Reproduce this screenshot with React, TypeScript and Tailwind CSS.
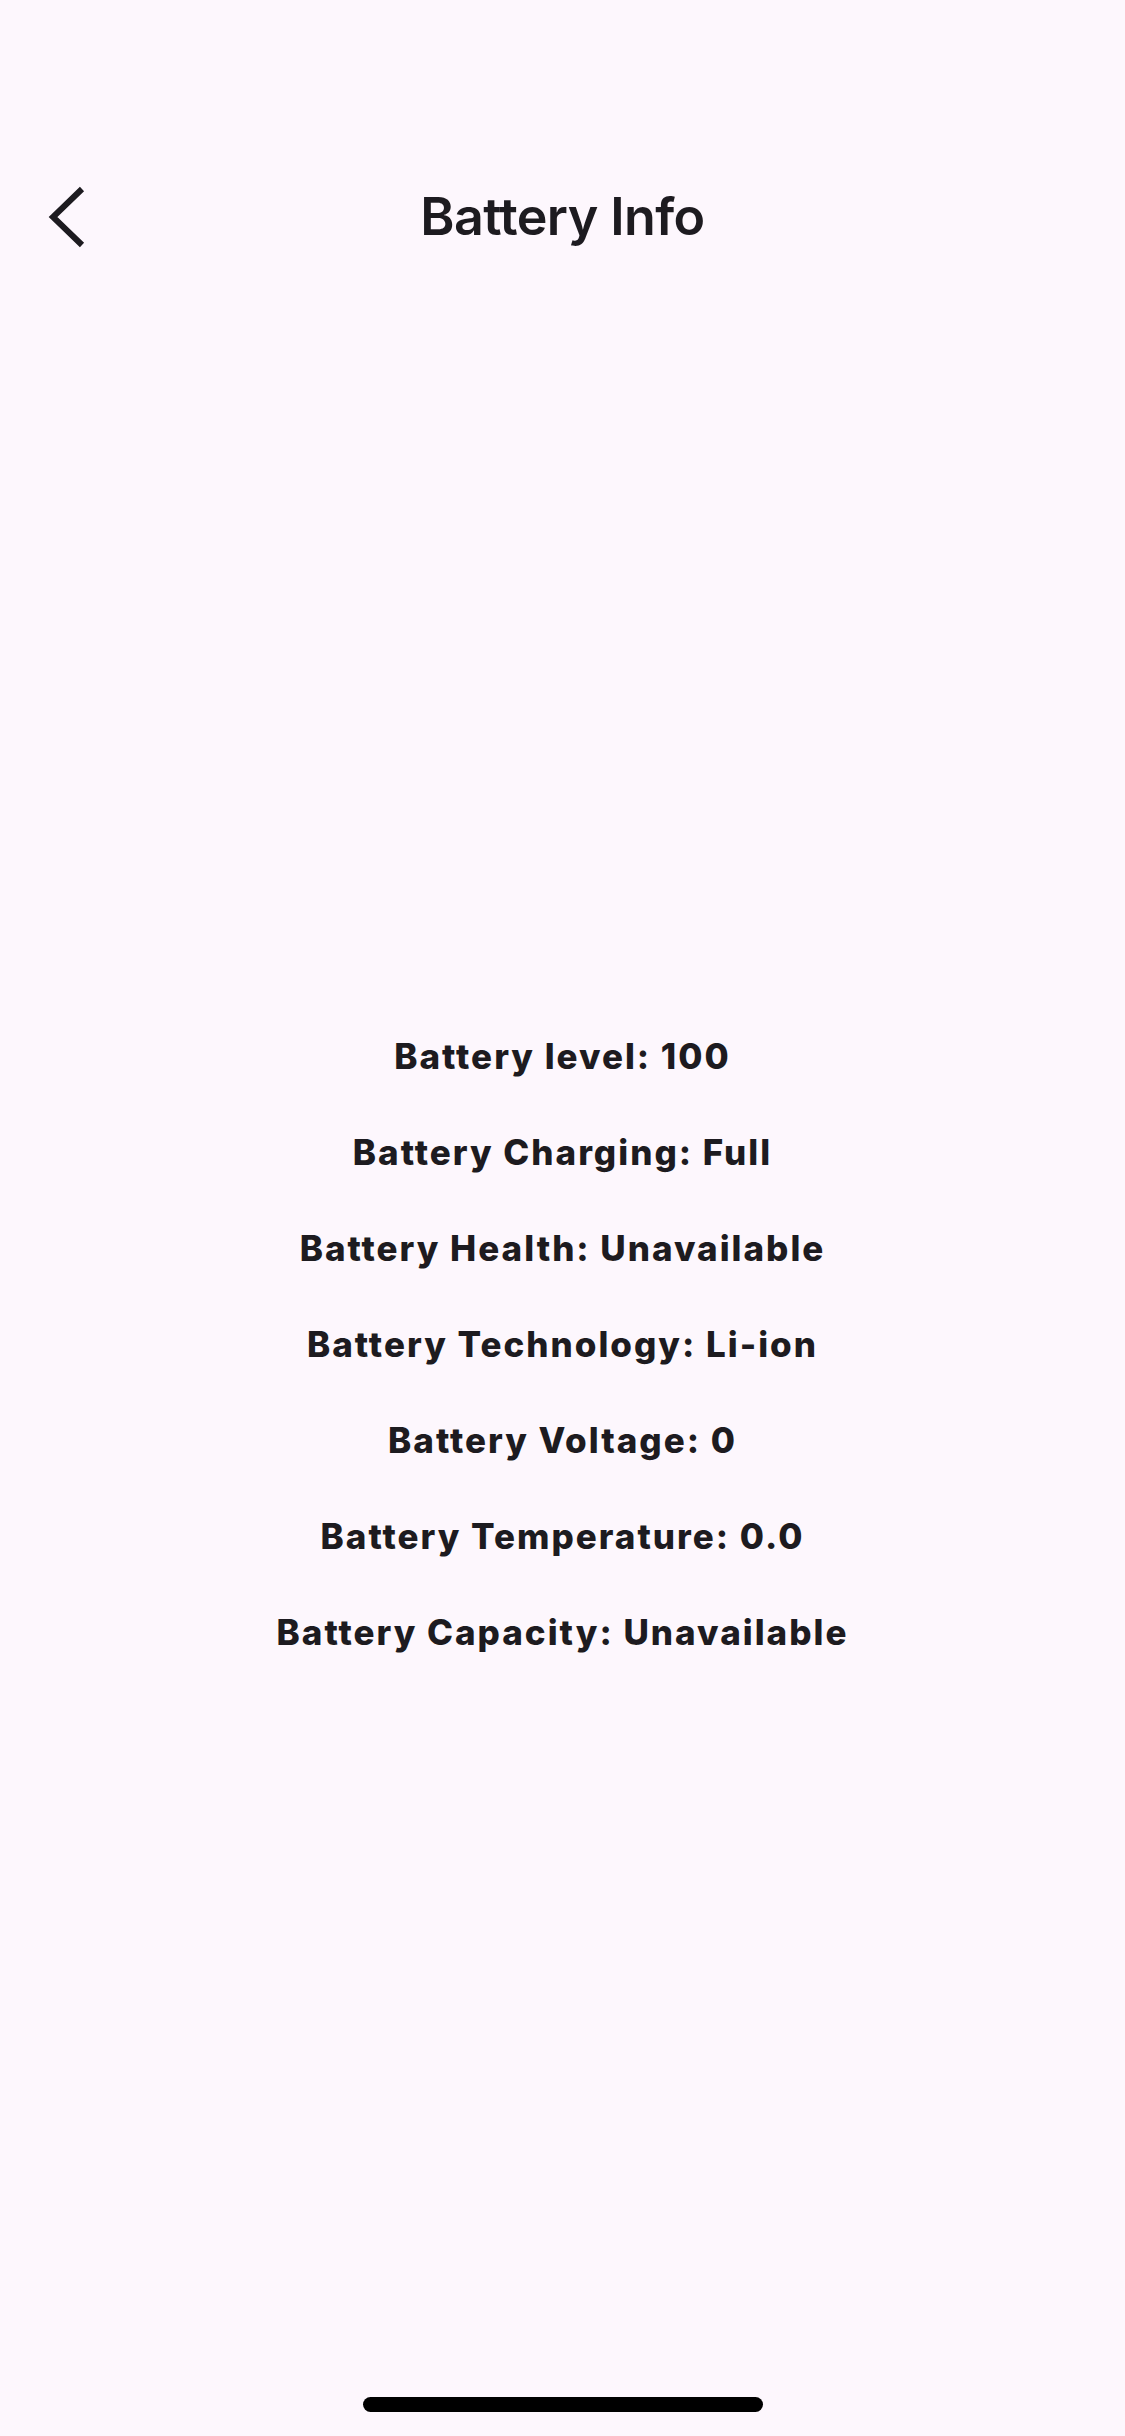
const rows = [
  "Battery level: 100",
  "Battery Charging: Full",
  "Battery Health: Unavailable",
  "Battery Technology: Li-ion",
  "Battery Voltage: 0",
  "Battery Temperature: 0.0",
  "Battery Capacity: Unavailable",
];

function BackIcon() {
  return (
    <svg width="40" height="64" viewBox="0 0 40 64" fill="none">
      <polyline
        points="35,4 6,32 35,60"
        stroke="#1d1b20"
        strokeWidth="6"
        strokeLinejoin="miter"
        fill="none"
      />
    </svg>
  );
}

export default function App() {
  return (
    <div className="w-[1125px] h-[2436px] bg-[#fdf7fd] flex flex-col font-['Inter',sans-serif] text-[#1d1b20]">
      {/* App bar */}
      <div className="mt-[160px] h-[114px] flex items-center">
        <div className="w-[160px] pl-[47px] flex items-center">
          <BackIcon />
        </div>
        <h1 className="flex-1 text-center text-[52px] font-semibold tracking-[-0.6px]">Battery Info</h1>
        <div className="w-[160px]" />
      </div>

      {/* Battery details */}
      <div className="mt-[734px] flex flex-col items-center">
        {rows.map((row) => (
          <p key={row} className="h-[96px] leading-[96px] text-[35px] font-extrabold tracking-[2px]">
            {row}
          </p>
        ))}
      </div>

      <div className="flex-1" />

      {/* Home indicator */}
      <div className="mb-[24px] flex justify-center">
        <div className="w-[400px] h-[15px] rounded-full bg-black" />
      </div>
    </div>
  );
}
